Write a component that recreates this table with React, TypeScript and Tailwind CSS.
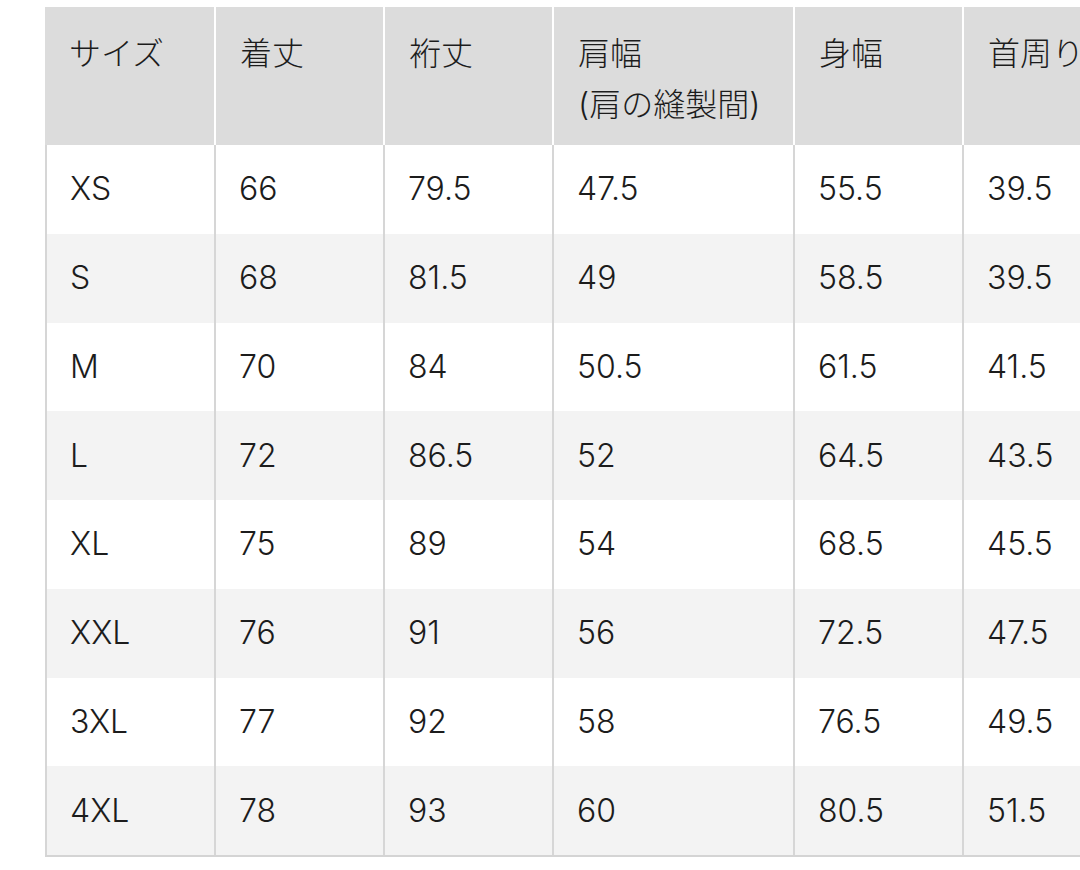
const headers: string[][] = [
  ["サイズ"],
  ["着丈"],
  ["裄丈"],
  ["肩幅", "(肩の縫製間)"],
  ["身幅"],
  ["首周り"],
];

const rows: string[][] = [
  ["XS", "66", "79.5", "47.5", "55.5", "39.5"],
  ["S", "68", "81.5", "49", "58.5", "39.5"],
  ["M", "70", "84", "50.5", "61.5", "41.5"],
  ["L", "72", "86.5", "52", "64.5", "43.5"],
  ["XL", "75", "89", "54", "68.5", "45.5"],
  ["XXL", "76", "91", "56", "72.5", "47.5"],
  ["3XL", "77", "92", "58", "76.5", "49.5"],
  ["4XL", "78", "93", "60", "80.5", "51.5"],
];

const cols = "grid grid-cols-[169px_169px_169px_241px_169px_169px]";

export default function App() {
  return (
    <div
      className="h-[870px] w-[1080px] overflow-hidden bg-white pl-[45px] pt-[7px] text-[32px] font-light text-[#1c1c1c]"
      style={{ fontFamily: 'Inter, "Noto Sans CJK JP", sans-serif' }}
    >
      <div className="w-[1086px]">
        {/* header */}
        <div className={`${cols} h-[138px] bg-[#dcdcdc]`}>
          {headers.map((h, i) => (
            <div
              key={i}
              className={`flex flex-col pl-[24px] pt-[21px] leading-[51px] ${i === 0 ? "" : "border-l-2 border-white"}`}
            >
              {h.map((line) => (
                <span key={line} className="whitespace-nowrap">
                  {line}
                </span>
              ))}
            </div>
          ))}
        </div>

        {/* body */}
        <div className="border-b-2 border-[#d4d4d4]">
          {rows.map((r, ri) => (
            <div
              key={r[0]}
              className={`${cols} h-[88.75px] ${ri % 2 === 1 ? "bg-[#f3f3f3]" : "bg-white"}`}
            >
              {r.map((v, ci) => (
                <div
                  key={ci}
                  className="flex items-center border-l-2 border-[#d6d6d6] pl-[23px]"
                >
                  {v}
                </div>
              ))}
            </div>
          ))}
        </div>
      </div>
    </div>
  );
}
